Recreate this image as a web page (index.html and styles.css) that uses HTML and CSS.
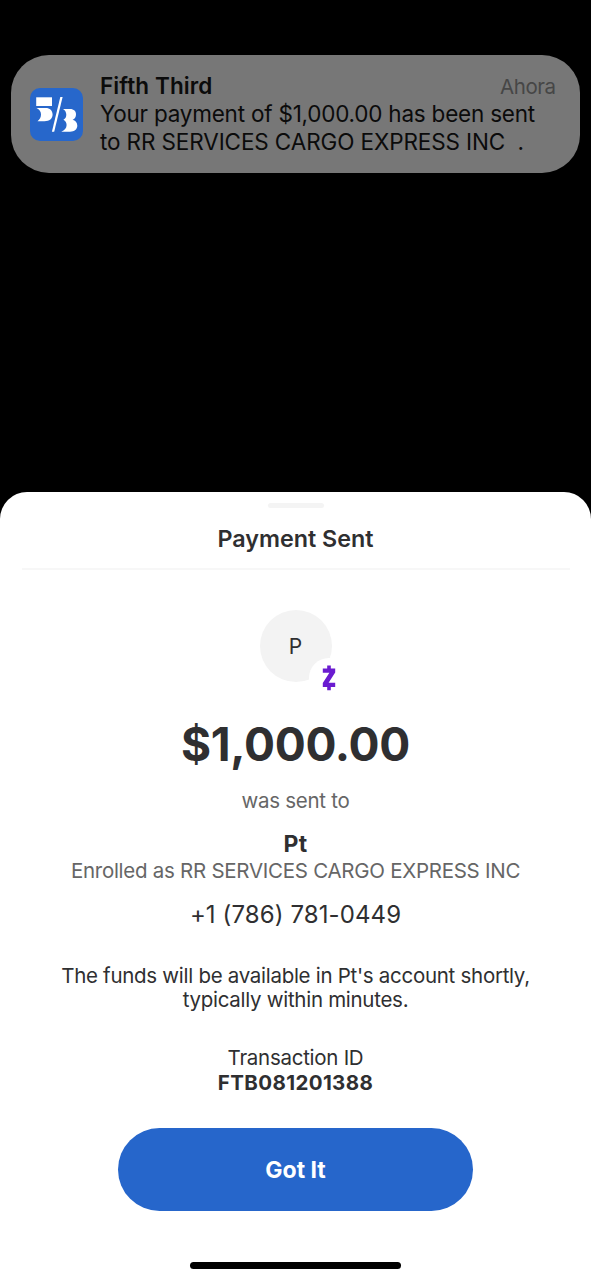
FILE: index.html
```html
<!DOCTYPE html>
<html lang="en">
<head>
<meta charset="utf-8">
<title>Payment Sent</title>
<link rel="stylesheet" href="styles.css">
</head>
<body>
<div class="screen">
  <section class="notification">
    <svg class="app-icon" viewBox="0 0 53 53" aria-hidden="true">
      <rect width="53" height="53" rx="10" fill="#2767cb"/>
      <g fill="#fff">
        <path d="M6.200 9.300H22V18H6.200Z"/>
        <path d="M6.500 20H15.500C20 20 22.600 22.700 22.600 26.500C22.600 30.700 19.400 33.200 14.500 33.200H7.500C9.800 31.500 11 29.500 11 26.500C11 23.600 9.500 21.500 6.500 20Z"/>
        <path d="M30.300 9H32.600L24.200 43.800H21.900Z"/>
        <path d="M33 21H40C44 21 46 23.300 46 26.500C46 29 44.800 30.900 42.600 31.700C45.300 32.500 47.300 34.500 47.300 37.600C47.300 41.500 44.500 43.800 40 43.800H31.300C34.500 42.400 36.600 40 36.600 37C36.600 34.700 35.600 32.800 33.400 31.700C35.400 30.700 36.300 29 36.300 26.800C36.300 24.200 35 22 33 21Z"/>
      </g>
    </svg>
    <div class="notification-text">
      <div class="notification-head">
        <strong class="notification-title">Fifth Third</strong>
        <span class="notification-time">Ahora</span>
      </div>
      <p class="notification-body"><span class="line-one">Your payment of $1,000.00 has been sent</span><br><span class="line-two">to RR SERVICES CARGO EXPRESS INC &nbsp;.</span></p>
    </div>
  </section>
  <main class="sheet">
    <div class="handle"></div>
    <h1 class="sheet-title">Payment Sent</h1>
    <div class="avatar">
      <span class="initial">P</span>
      <span class="badge">
        <svg class="zelle" viewBox="0 0 14 26" aria-hidden="true">
          <path d="M5.200 .5H8.800V3.600H13.200V7.600L6.600 17.800H13.200V22H8.800V25.300H5.200V22H.8V18L7.400 7.800H.8V3.600H5.200Z" fill="#6a1bd0"/>
        </svg>
      </span>
    </div>
    <p class="amount">$1,000.00</p>
    <p class="sent-to">was sent to</p>
    <p class="name">Pt</p>
    <p class="enrolled">Enrolled as RR SERVICES CARGO EXPRESS INC</p>
    <p class="phone">+1 (786) 781-0449</p>
    <p class="funds">The funds will be available in Pt's account shortly,<br>typically within minutes.</p>
    <p class="transaction">Transaction ID</p>
    <p class="transaction-id">FTB081201388</p>
    <button class="confirm" type="button">Got It</button>
    <div class="home-bar"></div>
  </main>
</div>
</body>
</html>
```
FILE: styles.css
```css
* { box-sizing: border-box; }
body { margin: 0; background: #000; font-family: Inter, "Liberation Sans", sans-serif; }
p, h1 { margin: 0; }
.screen {
  width: 591px; height: 1280px; overflow: hidden; background: #000;
  display: flex; flex-direction: column; justify-content: space-between;
  padding-top: 55.4px; white-space: nowrap;
}
.notification {
  height: 118px; margin: 0 11.4px; padding: 17px 24px 0 19px;
  display: flex; gap: 16.5px; background: #777; border-radius: 38px; color: #0b0b0b;
}
.app-icon { width: 53px; height: 53px; margin-top: 15.5px; flex: none; }
.notification-text { flex: 1; }
.notification-head { display: flex; justify-content: space-between; height: 27.7px; line-height: 28px; }
.notification-title { font-size: 22.5px; font-weight: 600; letter-spacing: 0.1px; }
.notification-time { font-size: 20.5px; letter-spacing: -0.45px; color: #464646; padding-top: 1px; }
.notification-body { font-size: 22.5px; line-height: 27.5px; }
.line-one { letter-spacing: -0.22px; }
.line-two { letter-spacing: -0.11px; }
.sheet {
  height: 788px; background: #fff; border-radius: 27px 27px 0 0; color: #2f2f31;
  display: flex; flex-direction: column; align-items: center; text-align: center;
}
.handle { width: 56px; height: 5px; margin-top: 11px; border-radius: 2.5px; background: #f4f4f4; }
.sheet-title {
  width: 548px; height: 62px; padding-top: 17px; border-bottom: 2px solid #f7f7f7;
  font-size: 23.3px; line-height: 28px; font-weight: 600; letter-spacing: 0;
}
.avatar {
  position: relative; width: 72px; height: 72px; margin-top: 40px; border-radius: 50%;
  background: #f3f3f3; display: grid; place-items: center;
}
.initial { font-size: 21px; line-height: 24px; padding-top: 1px; }
.badge {
  position: absolute; left: 49px; top: 48px; width: 40px; height: 40px;
  border-radius: 50%; background: #fff; display: grid; place-items: center;
}
.zelle { width: 14px; height: 26px; }
.amount { margin-top: 34px; font-size: 46px; line-height: 56px; font-weight: 700; letter-spacing: -0.3px; }
.sent-to { margin-top: 16.5px; font-size: 20.5px; line-height: 24px; letter-spacing: -0.27px; color: #666; }
.name { margin-top: 18.5px; font-size: 23px; line-height: 26px; font-weight: 700; letter-spacing: 0.3px; }
.enrolled { margin-top: 2px; font-size: 20.5px; line-height: 24px; letter-spacing: -0.27px; color: #666; }
.phone { margin-top: 17px; font-size: 24px; line-height: 30px; letter-spacing: 0.1px; }
.funds { margin-top: 33.5px; font-size: 20.5px; line-height: 24.5px; letter-spacing: -0.285px; }
.transaction { margin-top: 32.5px; font-size: 20.5px; line-height: 25px; letter-spacing: -0.27px; }
.transaction-id { font-size: 20.5px; line-height: 25px; font-weight: 700; letter-spacing: 0.38px; }
.confirm {
  width: 355px; height: 83px; margin-top: 33px; padding: 0; border: 0; border-radius: 42px;
  background: #2666cb; color: #fff; font: 700 23px/28px Inter, "Liberation Sans", sans-serif;
  letter-spacing: 0;
}
.home-bar { width: 211px; height: 7px; margin-top: 51px; border-radius: 4px; background: #000; }
```
